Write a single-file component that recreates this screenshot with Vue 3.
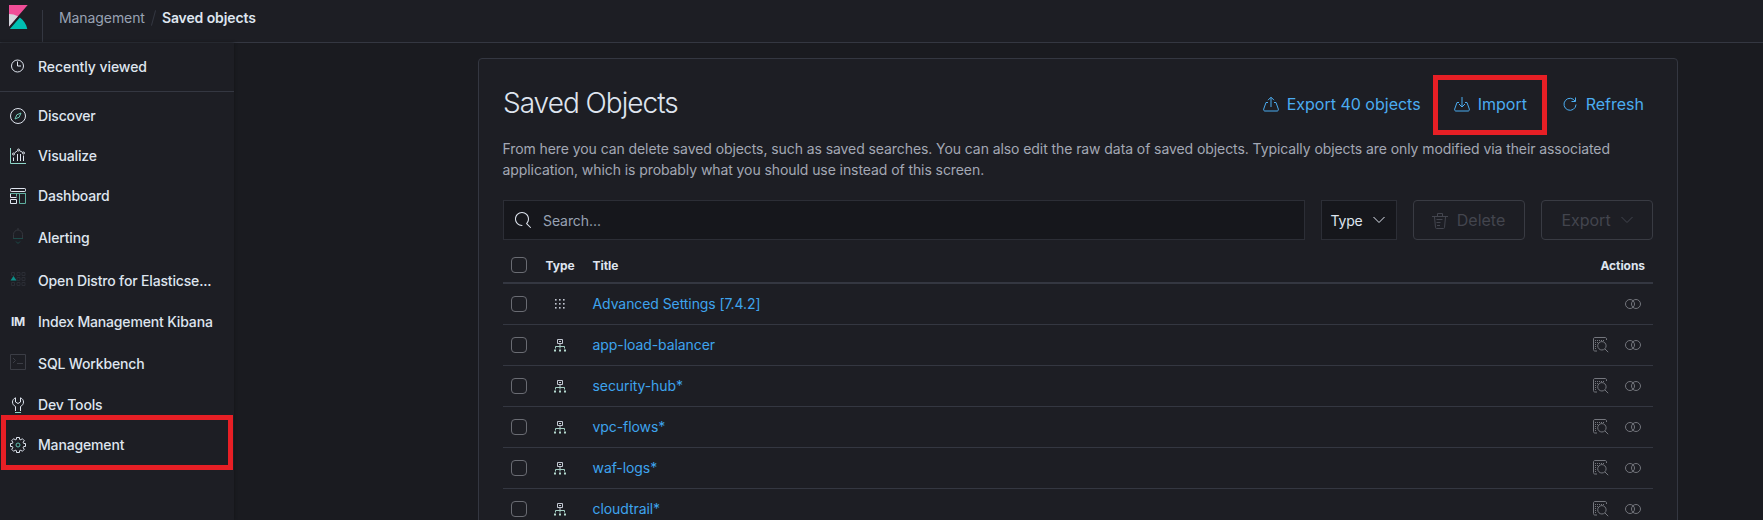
<script setup>
const apps = [
  { name: 'Discover', icon: 'discover' },
  { name: 'Visualize', icon: 'visualize' },
  { name: 'Dashboard', icon: 'dashboard' },
  { name: 'Alerting', icon: 'alerting', dim: true },
  { name: 'Open Distro for Elasticse...', icon: 'distro', dim: true },
  { name: 'Index Management Kibana', icon: 'im' },
  { name: 'SQL Workbench', icon: 'sql', dim: true },
  { name: 'Dev Tools', icon: 'tools' },
  { name: 'Management', icon: 'gear', marked: true },
]
const rows = [
  { title: 'Advanced Settings [7.4.2]', config: true },
  { title: 'app-load-balancer' },
  { title: 'security-hub*' },
  { title: 'vpc-flows*' },
  { title: 'waf-logs*' },
  { title: 'cloudtrail*' },
]
const steps = [0, 1, 2]
</script>

<template>
  <div class="page">
    <header class="topbar">
      <svg class="logo" width="24" height="24" viewBox="0 0 32 32">
        <path fill="#f04e98" d="M4 0v28.789L28.935.017z" />
        <path fill="#d4d6dd" d="M4 12v16.789l11.906-13.738A24.721 24.721 0 004 12" />
        <path fill="#00bfb3" d="M18.479 16.664L6.268 30.754l-1.073 1.237h23.191c-1.252-6.292-4.883-11.719-9.908-15.327" />
      </svg>
      <nav class="crumbs">
        <span class="crumb">Management</span>
        <i class="slash"></i>
        <span class="current">Saved objects</span>
      </nav>
    </header>

    <div class="body">
      <aside class="sidebar">
        <div class="recent item">
          <svg class="icon" width="16" height="16" viewBox="0 0 16 16" fill="none" stroke="#dfe5ef">
            <circle cx="7.5" cy="8" r="6" /><path d="M7.5 3.5V8H11" />
          </svg>
          <span class="label">Recently viewed</span>
        </div>
        <div class="apps">
          <div v-for="a in apps" :key="a.name" class="item" :class="{ dim: a.dim, marked: a.marked }">
            <span v-if="a.icon === 'im'" class="icon initials">IM</span>
            <svg v-else class="icon" width="16" height="16" viewBox="0 0 16 16" fill="none" stroke="#dfe5ef">
              <template v-if="a.icon === 'discover'">
                <circle cx="8" cy="8" r="7.5" />
                <path stroke="#6fc9b6" d="M11 5L9.2 9.2 5 11l1.8-4.2z" />
              </template>
              <template v-else-if="a.icon === 'visualize'">
                <path stroke="#8fd6c8" d="M.5 0v15.5H16" />
                <path d="M3.500 9.500V13M7.500 6v7M10.500 6v7M13.500 7.500V13" />
                <circle cx="3.500" cy="6" r="1" /><circle cx="8.500" cy="2" r="1" /><circle cx="13.500" cy="5" r="1" />
                <path d="M4.500 5l3-2.300M9.500 2.700l3 1.600" />
              </template>
              <template v-else-if="a.icon === 'dashboard'">
                <rect x=".5" y=".5" width="15" height="3" rx=".7" />
                <path stroke="#5fae9e" d="M0 5.500h16M6.500 6v2.500M9.500 6v9.500h6V6" />
                <path d="M.5 6v3.500h6M.5 11.500h6v4h-6z" />
              </template>
              <template v-else-if="a.icon === 'alerting'">
                <path stroke="#34363d" d="M8 0v2M3.500 10V6.500a4.500 4.500 0 019 0V10" />
                <path stroke="#1d4a48" d="M3 10.500h10M6 13.500l2 2 2-2" />
              </template>
              <template v-else-if="a.icon === 'distro'">
                <path stroke="#2b2d34" d="M1.500 1.500h3v3h-3zM7 1.500h3v3H7zM12 1.500h3v3h-3zM7 6.500h3v3H7zM12 6.500h3v3h-3zM1.500 11.500h3v3h-3zM7 11.500h3v3H7zM12 11.500h3v3h-3z" />
                <path fill="#0c8f88" stroke="none" d="M3.500 5L6.500 9.500H.5z" />
              </template>
              <template v-else-if="a.icon === 'sql'">
                <path stroke="#3b3d45" d="M.5.5h15v15H.5zM3 4l2.500 2.500L3 9M7 9.500h6" />
              </template>
              <template v-else-if="a.icon === 'tools'">
                <path d="M5.500.8C3.600 1.600 2.500 3.200 2.500 5c0 2.200 1.300 3.600 3 4.500V14M10.500.8c1.900.8 3 2.400 3 4.200 0 2.200-1.300 3.600-3 4.500V14M5.500.8V5L8 6.500 10.500 5V.8" />
                <path stroke="#8fd6c8" d="M5 15.500h6" />
              </template>
              <template v-else>
                <path d="M6.500 2.300V.5h3v1.800l1.400.6 1.300-1.300 2.200 2.200-1.300 1.300.6 1.400h1.800v3h-1.800l-.6 1.400 1.300 1.300-2.200 2.200-1.300-1.300-1.400.6v1.800h-3v-1.800l-1.400-.6-1.300 1.300-2.200-2.200 1.300-1.300-.6-1.400H.5v-3h1.800l.6-1.400-1.300-1.300 2.200-2.200 1.300 1.300z" />
                <circle cx="8" cy="8" r="2" stroke="#5fbfae" />
              </template>
            </svg>
            <span class="label">{{ a.name }}</span>
          </div>
        </div>
      </aside>

      <main class="content">
        <section class="panel">
          <div class="head">
            <h1>Saved Objects</h1>
            <div class="actions">
              <a class="export">
                <svg width="16" height="16" viewBox="0 0 16 16" fill="none" stroke="currentColor">
                  <path d="M5 6.500H3L.7 13c-.2 1.500.3 2 1.300 2h12c1 0 1.500-.5 1.300-2L13 6.500h-2M8 11V1.500M5 4.200l3-3 3 3" />
                </svg>Export 40 objects
              </a>
              <a class="import">
                <svg width="16" height="16" viewBox="0 0 16 16" fill="none" stroke="currentColor">
                  <path d="M5 6.500H3L.7 13c-.2 1.500.3 2 1.300 2h12c1 0 1.500-.5 1.300-2L13 6.500h-2M8 1v10M5 8l3 3 3-3" />
                </svg>Import
              </a>
              <a class="refresh">
                <svg width="16" height="16" viewBox="0 0 16 16" fill="none" stroke="currentColor">
                  <path d="M13.500 1.500v4h-4M13.200 5.300A6 6 0 1014 8.500" />
                </svg>Refresh
              </a>
            </div>
          </div>
          <p class="intro">
            From here you can delete saved objects, such as saved searches. You can also edit the raw data of saved objects. Typically objects are only modified via their associated<br>application, which is probably what you should use instead of this screen.
          </p>

          <div class="tools">
            <div class="search">
              <svg width="16" height="16" viewBox="0 0 16 16" fill="#dfe5ef">
                <path d="M11.271 11.978l3.872 3.873a.502.502 0 00.708 0 .502.502 0 000-.708l-3.565-3.564c2.380-2.747 2.267-6.923-.342-9.532-2.730-2.730-7.170-2.730-9.898 0-2.728 2.729-2.728 7.170 0 9.900a6.955 6.955 0 004.949 2.050.5.5 0 000-1 5.960 5.960 0 01-4.242-1.757 6.010 6.010 0 010-8.486 6.004 6.004 0 018.484 0 6.010 6.010 0 010 8.486.5.5 0 00-.034.738z" />
              </svg>
              <span>Search...</span>
            </div>
            <div class="filter">
              <span>Type</span>
              <svg width="12" height="8" viewBox="0 0 12 8" fill="none" stroke="currentColor"><path d="M.5 1L6 6.500 11.500 1" /></svg>
            </div>
            <div class="btn">
              <svg width="16" height="17" viewBox="0 0 16 17" fill="none" stroke="currentColor">
                <path d="M0 4.500h16M5.500 4V1.500h5V4M2.500 5l1 10.500c0 .6.400 1 1 1h7c.6 0 1-.4 1-1l1-10.500M4.500 7.500h6M4.500 10.500h4M5 13.500h3" />
              </svg>
              <span>Delete</span>
            </div>
            <div class="btn">
              <span>Export</span>
              <svg width="12" height="8" viewBox="0 0 12 8" fill="none" stroke="currentColor"><path d="M.5 1L6 6.500 11.500 1" /></svg>
            </div>
          </div>

          <div class="table">
            <div class="row thead">
              <i class="check"></i><span class="kind">Type</span><span>Title</span><span class="last">Actions</span>
            </div>
            <div v-for="r in rows" :key="r.title" class="row">
              <i class="check"></i>
              <span class="kind">
                <svg v-if="r.config" width="10" height="10" viewBox="0 0 10 10" fill="#c3c8d2">
                  <template v-for="y in steps" :key="y">
                    <rect v-for="x in steps" :key="x" :x="x * 4" :y="y * 4" width="1.600" height="1.600" />
                  </template>
                </svg>
                <svg v-else width="12" height="13" viewBox="0 0 12 13" fill="none" stroke="#c3c8d2">
                  <path d="M3.500.5h5v4h-5zM5 2.500h2M6 4.500v3" />
                  <path stroke="#a5cfc4" d="M1.500 9.500v-2h9v2M6 7.500v2" />
                  <path stroke="#b4d8ce" stroke-width="2" d="M0 11.500h2M5 11.500h2M10 11.500h2" />
                </svg>
              </span>
              <a class="title">{{ r.title }}</a>
              <span class="last ops">
                <svg v-if="!r.config" width="16" height="16" viewBox="0 0 16 16" fill="none" stroke="currentColor">
                  <path d="M4 14H2c-1 0-1.500-.5-1.500-1.500V2C.5 1 1 .5 2 .5h10c1 0 1.500.5 1.500 1.500v1" />
                  <path stroke-dasharray="1 1" d="M2 3.500h10M2 5.500h3M2 7.500h2M2 9.500h2M2 11.500h2" />
                  <circle cx="8.900" cy="8.800" r="4.200" /><path d="M12 12l3.200 3.200" />
                </svg>
                <svg width="16" height="10" viewBox="0 0 16 10" fill="none" stroke="currentColor">
                  <circle cx="5" cy="5" r="4.500" /><circle cx="11" cy="5" r="4.500" />
                </svg>
              </span>
            </div>
          </div>
        </section>
      </main>
    </div>
  </div>
</template>

<style>
body { margin: 0; background: #1a1b20; overflow: hidden; }
</style>

<style scoped>
* { box-sizing: border-box; }
.page { width: 1763px; height: 520px; overflow: hidden; display: flex; flex-direction: column; font-family: Inter, "Open Sans", sans-serif; font-size: 14px; color: #dfe5ef; letter-spacing: -0.08px; }
svg { display: block; flex: none; }
.topbar { height: 43px; flex: none; display: flex; align-items: flex-start; background: #1d1e24; border-bottom: 1px solid #343741; }
.logo { margin: 5px 0 0 6px; }
.crumbs { margin: 10px 0 0 12px; height: 32px; border-left: 1px solid #343741; padding-left: 16px; display: flex; line-height: 15px; }
.crumb { color: #98a2b3; }
.slash { width: 1px; height: 16px; background: #343741; transform: rotate(15deg); margin: 0 8px; }
.current { font-weight: 600; letter-spacing: -0.1px; }
.body { flex: 1; display: flex; min-height: 0; }
.sidebar { width: 234px; background: #1d1e24; box-shadow: 0 0 3px #121317; z-index: 1; }
.item { display: flex; align-items: center; padding-left: 10px; gap: 12px; font-weight: 500; white-space: nowrap; letter-spacing: -0.16px; }
.label { padding-bottom: 2px; }
.icon { width: 16px; flex: none; }
.recent { height: 49px; border-bottom: 1px solid #343741; letter-spacing: -0.06px; }
.recent .icon { margin-top: -2px; }
.apps { display: grid; padding-top: 4px; grid-template-rows: 40px 40px 40px 44px 42px 40px 44px 38px 42px; }
.dim .icon { margin-top: -4px; }
.initials { font-size: 12px; font-weight: 700; text-align: center; padding-bottom: 2px; }
.marked { position: relative; }
.marked::after { content: ""; box-sizing: border-box; position: absolute; left: 1px; top: -9px; width: 232px; height: 55px; border: 5px solid #e71f25; }
.content { flex: 1; padding: 15px 0 0 244px; }
.panel { width: 1200px; height: 520px; background: #1d1e24; border: 1px solid #343741; border-radius: 4px; padding: 24px; }
.head { height: 42px; display: flex; justify-content: space-between; align-items: center; }
h1 { margin: -2px 0 0; font-size: 28px; font-weight: 300; line-height: 40px; letter-spacing: -1px; }
.actions { display: flex; font-size: 16px; color: #4bacf0; letter-spacing: 0; padding: 0 9px 1px 0; }
.actions a { display: flex; align-items: center; gap: 8px; white-space: nowrap; }
.export { width: 191px; }
.import { width: 108px; position: relative; }
.import::after { content: ""; box-sizing: border-box; position: absolute; left: -21px; top: -19px; width: 114px; height: 60px; border: 5px solid #e71f25; }
.intro { margin: 13px 0 0 -0.5px; line-height: 21px; color: #a3a8b4; white-space: nowrap; }
.tools { margin-top: 20px; display: flex; gap: 16px; }
.tools > div { height: 40px; display: flex; align-items: center; border: 1px solid #2c2e36; }
.search { width: 802px; background: #16171c; padding-left: 11px; gap: 12px; color: #98a2b3; }
.tools > .filter { width: 76px; background: #16171c; justify-content: center; gap: 11px; letter-spacing: -0.2px; padding-right: 2px; }
.tools > .btn { width: 112px; justify-content: center; gap: 9px; border-color: #393b43; border-radius: 4px; color: #43454e; font-size: 16px; letter-spacing: 0; }
.btn span { padding-right: 1px; }
.table { margin-top: 7px; }
.row { height: 41px; display: grid; grid-template-columns: 35px 54.5px 1fr auto; align-items: center; padding: 0 9px 0 0; border-bottom: 1px solid #343741; }
.thead { height: 37px; padding-right: 8px; border-bottom-width: 2px; font-size: 12px; font-weight: 700; letter-spacing: -0.05px; }
.thead span { padding-top: 1px; }
.check { width: 16px; height: 16px; margin-left: 8px; border: 1px solid #6a6c73; border-radius: 4px; }
.row .kind { width: 42px; display: flex; justify-content: center; margin-left: 1px; }
.title { color: #3ea4ee; padding-bottom: 2px; }
.ops { display: flex; align-items: center; gap: 16px; color: #74767d; margin-right: 3px; }
</style>
